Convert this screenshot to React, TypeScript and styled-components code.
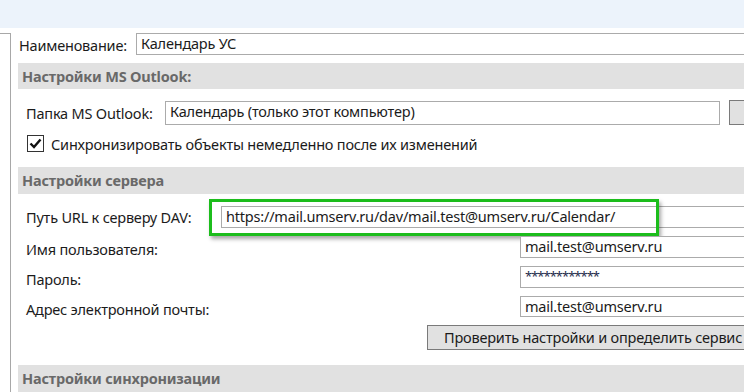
import React from "react";
import styled, { createGlobalStyle } from "styled-components";

const Global = createGlobalStyle`
  html, body { margin: 0; padding: 0; background: #fff; }
  body {
    font-family: "Noto Sans", "Open Sans", sans-serif;
    font-size: 14.5px;
    letter-spacing: -0.2px;
    color: #1b1b1b;
  }
  * { box-sizing: border-box; }
`;

const Page = styled.div`
  width: 744px;
  height: 392px;
  overflow: hidden;
  position: relative;
`;

const TopBar = styled.div`
  height: 28px;
  background: #ecf3fb;
`;

const Body = styled.div`
  display: flex;
  margin-top: 5px;
  height: 359px;
`;

const LeftStub = styled.div`
  width: 11px;
  flex: none;
  border-top: 1px solid #a8a8a8;
  border-right: 1px solid #a8a8a8;
`;

const Main = styled.div`
  flex: 1;
  min-width: 0;
  padding-left: 7px;
  display: flex;
  flex-direction: column;
`;

const Row = styled.div<{ $indent?: number; $mt?: number; $h?: number }>`
  display: flex;
  align-items: center;
  white-space: nowrap;
  padding-left: ${(p) => p.$indent ?? 0}px;
  margin-top: ${(p) => p.$mt ?? 0}px;
  height: ${(p) => p.$h ?? 22}px;
  position: relative;
`;

const Label = styled.div<{ $w: number; $dy?: number }>`
  width: ${(p) => p.$w}px;
  flex: none;
  line-height: 20px;
  position: relative;
  top: ${(p) => p.$dy ?? 0}px;
`;

const Field = styled.div<{ $over?: number }>`
  flex: 1;
  height: 100%;
  border: 1px solid #ababab;
  background: #fff;
  padding-left: 4px;
  line-height: 19px;
  margin-right: ${(p) => -(p.$over ?? 10)}px;
  overflow: hidden;
`;

const Password = styled(Field)`
  font-size: 13px;
  letter-spacing: -1px;
  line-height: 18px;
  color: #1c2a4a;
`;

const SideButton = styled.div`
  width: 30px;
  height: 25px;
  flex: none;
  margin-left: 9px;
  margin-right: -15px;
  border: 1px solid #7a7a7a;
  background: #e1e1e1;
`;

const Section = styled.div<{ $mt: number }>`
  margin-top: ${(p) => p.$mt}px;
  height: 27px;
  background: #e1e1e1;
  color: #696969;
  font-weight: 700;
  padding-left: 4px;
  line-height: 26px;
  white-space: nowrap;
`;

const CheckBox = styled.div`
  width: 17px;
  height: 17px;
  border: 1px solid #333;
  background: #fff;
  flex: none;
  display: flex;
  align-items: center;
  justify-content: center;
  margin-right: 7px;
`;

const ActionButton = styled.div`
  height: 25px;
  width: 360px;
  flex: none;
  border: 1px solid #7a7a7a;
  background: #e1e1e1;
  padding-left: 16px;
  line-height: 22px;
`;

const Highlight = styled.div`
  position: absolute;
  left: 191px;
  top: -7px;
  width: 450px;
  height: 37px;
  border: 3px solid #1cbd1c;
  box-shadow: 2px 3px 4px rgba(0, 0, 0, 0.35);
  pointer-events: none;
`;

export default function App() {
  return (
    <Page>
      <Global />
      <TopBar />
      <Body>
        <LeftStub />
        <Main>
          <Row $indent={1}>
            <Label $w={117} $dy={1}>Наименование:</Label>
            <Field>Календарь УС</Field>
          </Row>
          <Section $mt={8}>Настройки MS Outlook:</Section>
          <Row $indent={8} $mt={11} $h={25}>
            <Label $w={139}>Папка MS Outlook:</Label>
            <Field style={{ height: 24 }} $over={0}>Календарь (только этот компьютер)</Field>
            <SideButton />
          </Row>
          <Row $indent={9} $mt={10} $h={17}>
            <CheckBox>
              <svg width="13" height="11" viewBox="0 0 13 11">
                <path d="M1.5 5.5 L5 9 L11.5 1.5" fill="none" stroke="#111" strokeWidth="2.4" />
              </svg>
            </CheckBox>
            <span>Синхронизировать объекты немедленно после их изменений</span>
          </Row>
          <Section $mt={15}>Настройки сервера</Section>
          <Row $indent={8} $mt={12}>
            <Label $w={195}>Путь URL к серверу DAV:</Label>
            <Field>https://mail.umserv.ru/dav/mail.test@umserv.ru/Calendar/</Field>
            <Highlight />
          </Row>
          <Row $indent={8} $mt={8}>
            <Label $w={494} $dy={2}>Имя пользователя:</Label>
            <Field>mail.test@umserv.ru</Field>
          </Row>
          <Row $indent={8} $mt={8}>
            <Label $w={494} $dy={2}>Пароль:</Label>
            <Password>************</Password>
          </Row>
          <Row $indent={8} $mt={8}>
            <Label $w={494} $dy={3}>Адрес электронной почты:</Label>
            <Field>mail.test@umserv.ru</Field>
          </Row>
          <Row $indent={409} $mt={8} $h={25}>
            <ActionButton>Проверить настройки и определить сервис</ActionButton>
          </Row>
          <Section $mt={15}>Настройки синхронизации</Section>
        </Main>
      </Body>
    </Page>
  );
}
